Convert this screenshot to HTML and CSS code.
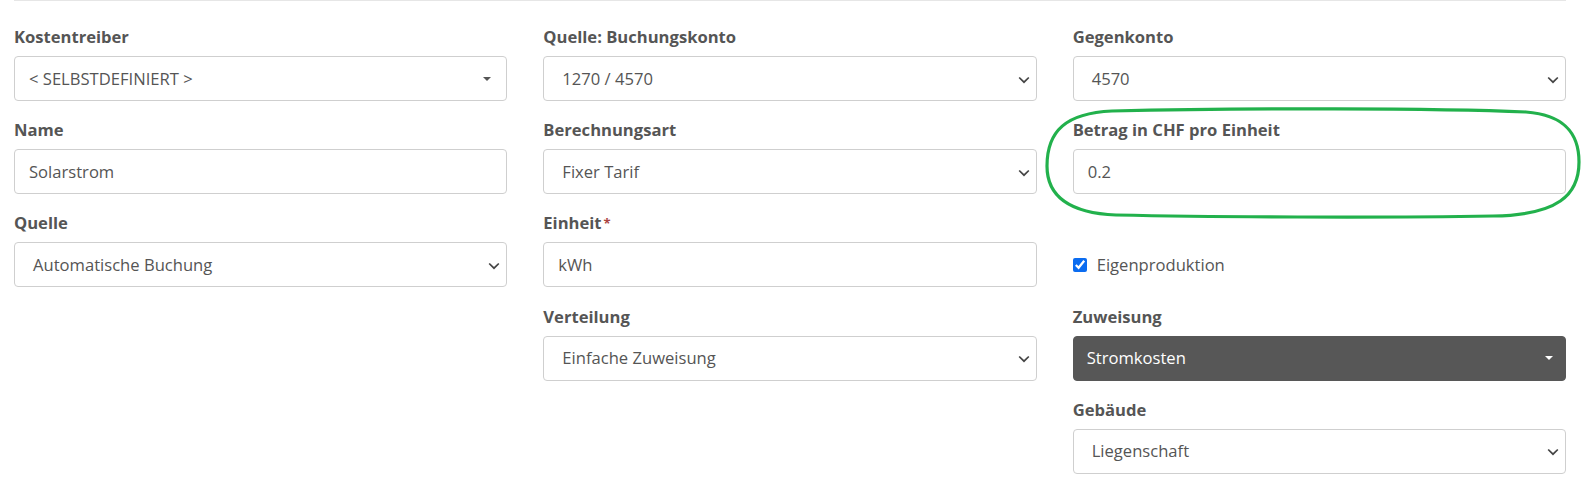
FILE: index.html
```html
<!DOCTYPE html>
<html lang="de">
<head>
<meta charset="utf-8">
<title>Kostentreiber</title>
<link rel="stylesheet" href="styles.css">
</head>
<body>
<div class="page">
  <div class="form">
    <div class="col">
      <div class="group">
        <label class="lbl">Kostentreiber</label>
        <div class="ctl picker">
          <span>&lt; SELBSTDEFINIERT &gt;</span>
          <svg class="caret" width="8" height="4" viewBox="0 0 8 4"><polygon points="0,0 8,0 4,4" fill="#555"/></svg>
        </div>
      </div>
      <div class="group">
        <label class="lbl">Name</label>
        <div class="ctl input"><span>Solarstrom</span></div>
      </div>
      <div class="group">
        <label class="lbl">Quelle</label>
        <div class="ctl select">
          <span>Automatische Buchung</span>
          <svg class="chev" width="12" height="8" viewBox="0 0 12 8"><polyline points="1.2,1.5 6,6.2 10.8,1.5" fill="none" stroke="#444" stroke-width="1.7"/></svg>
        </div>
      </div>
    </div>

    <div class="col">
      <div class="group">
        <label class="lbl">Quelle: Buchungskonto</label>
        <div class="ctl select">
          <span>1270 / 4570</span>
          <svg class="chev" width="12" height="8" viewBox="0 0 12 8"><polyline points="1.2,1.5 6,6.2 10.8,1.5" fill="none" stroke="#444" stroke-width="1.7"/></svg>
        </div>
      </div>
      <div class="group">
        <label class="lbl">Berechnungsart</label>
        <div class="ctl select">
          <span>Fixer Tarif</span>
          <svg class="chev" width="12" height="8" viewBox="0 0 12 8"><polyline points="1.2,1.5 6,6.2 10.8,1.5" fill="none" stroke="#444" stroke-width="1.7"/></svg>
        </div>
      </div>
      <div class="group">
        <label class="lbl">Einheit<span class="req">*</span></label>
        <div class="ctl input"><span>kWh</span></div>
      </div>
      <div class="group">
        <label class="lbl">Verteilung</label>
        <div class="ctl select">
          <span>Einfache Zuweisung</span>
          <svg class="chev" width="12" height="8" viewBox="0 0 12 8"><polyline points="1.2,1.5 6,6.2 10.8,1.5" fill="none" stroke="#444" stroke-width="1.7"/></svg>
        </div>
      </div>
    </div>

    <div class="col">
      <div class="group">
        <label class="lbl">Gegenkonto</label>
        <div class="ctl select">
          <span>4570</span>
          <svg class="chev" width="12" height="8" viewBox="0 0 12 8"><polyline points="1.2,1.5 6,6.2 10.8,1.5" fill="none" stroke="#444" stroke-width="1.7"/></svg>
        </div>
      </div>
      <div class="group marked">
        <label class="lbl">Betrag in CHF pro Einheit</label>
        <div class="ctl input"><span>0.2</span></div>
        <svg class="ring" width="538" height="113" viewBox="0 0 538 113">
          <path d="M68 4 C 200 1, 392 1, 482 5 C 522 8, 535 28, 535 55 C 535 88, 514 108, 449 109 C 332 111, 170 110, 72 108 C 24 106, 3 89, 3 59 C 3 24, 22 6, 68 4 Z" fill="none" stroke="#22b14c" stroke-width="3.2"/>
        </svg>
      </div>
      <div class="check-row">
        <input type="checkbox" id="eigen" checked>
        <label for="eigen" class="check-lbl">Eigenproduktion</label>
      </div>
      <div class="group">
        <label class="lbl">Zuweisung</label>
        <div class="ctl picker dark">
          <span>Stromkosten</span>
          <svg class="caret" width="8" height="4" viewBox="0 0 8 4"><polygon points="0,0 8,0 4,4" fill="#fff"/></svg>
        </div>
      </div>
      <div class="group">
        <label class="lbl">Gebäude</label>
        <div class="ctl select">
          <span>Liegenschaft</span>
          <svg class="chev" width="12" height="8" viewBox="0 0 12 8"><polyline points="1.2,1.5 6,6.2 10.8,1.5" fill="none" stroke="#444" stroke-width="1.7"/></svg>
        </div>
      </div>
    </div>
  </div>
</div>
</body>
</html>
```

FILE: styles.css
```css
* { box-sizing: border-box; }

html, body {
  margin: 0;
  padding: 0;
  background: #fff;
}

body {
  font-family: "Open Sans", "Liberation Sans", Arial, sans-serif;
  font-size: 16.6px;
  color: #555;
}

.page {
  padding: 0 17px 0 14px;
}

.form {
  border-top: 1px solid #e6e6e6;
  padding-top: 24px;
  display: grid;
  grid-template-columns: repeat(3, 1fr);
  column-gap: 36px;
  align-items: start;
}

.col {
  display: flex;
  flex-direction: column;
}

.group {
  display: flex;
  flex-direction: column;
  margin-bottom: 17.2px;
}

.marked {
  position: relative;
}

.lbl {
  display: block;
  font-weight: 700;
  line-height: 24px;
  margin-bottom: 7px;
  color: #555;
}

.req {
  color: #a94442;
  font-size: 13px;
  vertical-align: 1px;
  margin-left: 2px;
}

.ctl {
  height: 45px;
  border: 1px solid #cfcfcf;
  border-radius: 4px;
  background: #fff;
  display: flex;
  align-items: center;
  justify-content: space-between;
  color: #555;
  line-height: 22px;
}

.input {
  padding: 0 14px;
}

.select {
  padding: 0 6px 0 18px;
}

.chev {
  display: block;
  margin-top: 2px;
}

.picker {
  padding: 0 15px 0 14px;
}

.caret {
  display: block;
}

.dark {
  background: #575757;
  border-color: #575757;
  color: #fff;
  padding: 0 12px 0 13px;
}

.check-row {
  margin-top: 31px;
  margin-bottom: 17.2px;
  height: 45px;
  display: flex;
  align-items: center;
  gap: 10px;
}

.check-row input {
  margin: 0;
  width: 14px;
  height: 14px;
  accent-color: #0b6cf0;
}

.check-lbl {
  line-height: 22px;
  color: #555;
}

.ring {
  position: absolute;
  left: -29px;
  top: -11px;
  pointer-events: none;
}
```
